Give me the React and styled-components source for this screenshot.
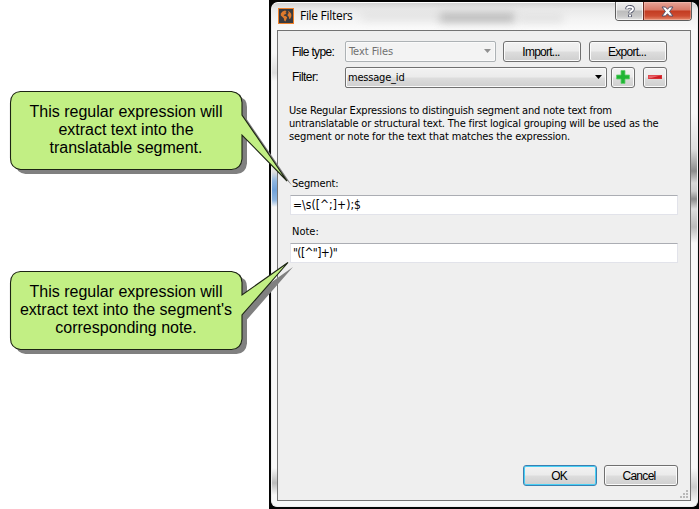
import React from "react";
import styled, { createGlobalStyle, css } from "styled-components";

const GlobalStyle = createGlobalStyle`
  * { box-sizing: border-box; }
  body { margin: 0; background: #fff; overflow: hidden; }
`;

const Page = styled.main`
  position: relative;
  width: 699px;
  height: 509px;
  display: flex;
  justify-content: flex-end;
  font-family: "DejaVu Sans Condensed", "DejaVu Sans", sans-serif;
  font-stretch: condensed;
  font-size: 11px;
  color: #000;
`;

const Backdrop = styled.div`
  width: 430px;
  height: 509px;
  padding: 2px;
  background: #050505;
`;

const Dialog = styled.section`
  display: flex;
  flex-direction: column;
  width: 427px;
  height: 505px;
  padding: 0 6px 5px;
  border: 1px solid #eee;
  border-top-color: #fff;
  border-radius: 7px 7px 6px 6px;
  background:
    linear-gradient(180deg, transparent 50px, #ddd 70px, transparent 78px, transparent 160px, #e0e0e0 169px, #8fb6e0 178px, #70a2da 187px, #8fb6e0 197px, transparent 204px, transparent 465px, #bbb 480px, transparent 492px) 0 0 / 6px 100% no-repeat,
    linear-gradient(180deg, transparent 110px, #ddd 146px, #8c8c8c 168px, #d8d8d8 180px, #ccc 188px, #8c8c8c 196px, #ddd 206px, #bbb 224px, transparent 240px, transparent 465px, #ccc 484px, transparent 500px) 100% 0 / 6px 100% no-repeat,
    #f8f8f8;
`;

const TitleBar = styled.header`
  position: relative;
  display: flex;
  align-items: center;
  height: 27px;
  flex: none;
  margin: 0 -6px;
  padding: 0 0 1px 6px;
  border-radius: 6px 6px 0 0;
  background: linear-gradient(180deg, #d4d4d4, #e9e9e9 6px, #f3f3f3 16px, #fbfbfb);
`;

const Smudge = styled.span`
  position: absolute;
  left: ${(p) => p.$left}px;
  top: ${(p) => p.$top}px;
  width: ${(p) => p.$width}px;
  height: ${(p) => p.$height}px;
  background: ${(p) => p.$tone};
  filter: blur(4px);
`;

const AppIcon = styled.svg`
  flex: none;
  width: 16px;
  height: 16px;
`;

const Title = styled.h1`
  position: relative;
  flex: 1;
  margin: 0 0 0 6px;
  font: 400 12px/16px "Open Sans", "Noto Sans", sans-serif;
  letter-spacing: -0.3px;
`;

const CaptionButtons = styled.div`
  position: relative;
  align-self: flex-start;
  display: flex;
  height: 19px;
  width: 77px;
  margin: -1px 5px 0 0;
  border: 1px solid #5d5d5d;
  border-top: 0;
  border-radius: 0 0 4px 4px;
  overflow: hidden;
`;

const CaptionButton = styled.button`
  display: flex;
  align-items: center;
  justify-content: center;
  height: 100%;
  padding: 0;
  border: 0;
  ${(p) =>
    p.$close
      ? css`
          width: 48px;
          border-left: 1px solid #6c2a20;
          background: linear-gradient(180deg, #e7a497, #d87967 8px, #c33b21 9px, #cd4c31 14px, #e58a6d);
          box-shadow: inset 0 0 0 1px rgba(255, 210, 200, 0.4);
        `
      : css`
          width: 27px;
          background: linear-gradient(180deg, #ededed, #dedede 8px, #bcbcbc 9px, #c7c7c7 14px, #e4e4e4);
          box-shadow: inset 0 0 0 1px rgba(255, 255, 255, 0.7);
        `}
`;

const Client = styled.div`
  display: flex;
  flex-direction: column;
  flex: 1;
  min-height: 0;
  width: 414px;
  margin-left: -1px;
  border: 1px solid #737373;
  background: #efefef;
`;

const FilterGrid = styled.div`
  display: grid;
  grid-template-columns: 52px 1fr;
  grid-auto-rows: 22px;
  row-gap: 4px;
  margin: 9px 22px 0 15px;
`;

const systemFace = css`
  font-family: "Liberation Sans", Arial, sans-serif;
  font-size: 12px;
`;

const Label = styled.label`
  display: block;
  ${(p) => p.$system && systemFace}
  line-height: 14px;
  white-space: nowrap;
  letter-spacing: ${(p) => p.$spacing || 0}px;
  margin: ${(p) => p.$margin || "0"};
`;

const Controls = styled.div`
  display: flex;
  align-items: center;
  gap: ${(p) => p.$gap}px;
`;

const Combo = styled.button`
  display: flex;
  align-items: center;
  justify-content: space-between;
  width: ${(p) => p.$width}px;
  height: 21px;
  padding: 0 4px 0 ${(p) => (p.$disabled ? 3 : 2)}px;
  border: 1px solid ${(p) => (p.$disabled ? "#adb2b5" : "#707070")};
  border-radius: 2px;
  background: ${(p) =>
    p.$disabled ? "#f3f3f3" : "linear-gradient(180deg, #f2f2f2, #ebebeb 48%, #dddddd 52%, #cfcfcf)"};
  box-shadow: inset 0 0 0 1px #fafafa;
  color: ${(p) => (p.$disabled ? "#707070" : "#000")};
  font: inherit;
  letter-spacing: ${(p) => p.$spacing || 0}px;
`;

const Arrow = styled.svg`
  width: 7px;
  height: 4px;
  fill: currentColor;
  opacity: ${(p) => (p.$faded ? 0.75 : 1)};
`;

const Button = styled.button`
  display: flex;
  align-items: center;
  justify-content: center;
  width: ${(p) => p.$width}px;
  height: 21px;
  padding: ${(p) => p.$drop || 0}px ${(p) => p.$padRight || 0}px 0 0;
  border: 1px solid ${(p) => (p.$primary ? "#3c7fb1" : "#707070")};
  border-radius: 3px;
  background: linear-gradient(180deg, #f2f2f2, #ebebeb 48%, #dddddd 52%, #cfcfcf);
  box-shadow: inset 0 0 0 1px ${(p) => (p.$primary ? "#48d0f5" : "#fbfbfb")};
  color: #000;
  ${systemFace}
  letter-spacing: ${(p) => p.$spacing || 0}px;
`;

const Glyph = styled.svg`
  display: block;
  flex: none;
`;

const Description = styled.p`
  margin: 16px 0 0 11px;
  line-height: 13px;
`;

const Line = styled.span`
  display: block;
  white-space: nowrap;
  letter-spacing: ${(p) => p.$spacing}px;
`;

const Fields = styled.div`
  display: flex;
  flex-direction: column;
  flex: 1;
  margin: 34px 12px 0;
`;

const Expression = styled.div`
  height: 20px;
  margin: 4px 0 10px;
  padding: 0 2px;
  border: 1px solid #e2e3ea;
  border-top-color: #abadb3;
  background: #fff;
  font-size: 12px;
  line-height: 18px;
  letter-spacing: ${(p) => p.$spacing}px;
`;

const Footer = styled.footer`
  display: flex;
  justify-content: flex-end;
  align-items: flex-end;
  height: 36px;
  padding-bottom: 1px;
`;

const Actions = styled.div`
  display: flex;
  gap: 7px;
  margin-bottom: 13px;
`;

const Grip = styled.svg`
  width: 9px;
  height: 9px;
  margin: 0 1px 0 2px;
`;

const Callout = styled.aside`
  position: absolute;
  left: 0;
  top: ${(p) => p.$top}px;
  width: 300px;
  height: 130px;
  pointer-events: none;
`;

const Balloon = styled.svg`
  position: absolute;
  inset: 0;
`;

const CalloutText = styled.div`
  position: relative;
  width: 232px;
  margin-left: 10px;
  padding-top: ${(p) => p.$pad}px;
  font: 16px/18px "Liberation Sans", Arial, sans-serif;
  text-align: center;
`;

const upperBalloon =
  "M20.5 11.5H231.5Q242 13 242 22.5V35L287 101L242 55V79Q241 89 231.5 89.5H20.5Q10.5 88 10.5 78.5V22.5Q11 12 20.5 11.5Z";
const lowerBalloon =
  "M20.5 21.5H231.5Q242 23 242 32.5V45L288 12.5L242 65V89Q241 99 231.5 99.5H20.5Q10.5 98 10.5 88.5V32.5Q11 22 20.5 21.5Z";

function CalloutBalloon({ top, d, pad, lines }) {
  return (
    <Callout $top={top}>
      <Balloon width="300" height="130">
        <path d={d} fill="#808080" transform="translate(5 4.5)" />
        <path d={d} fill="#c2ef84" stroke="#1c2413" strokeWidth="1.1" />
      </Balloon>
      <CalloutText $pad={pad}>
        {lines.map((text) => (
          <Line key={text} $spacing={0}>{text}</Line>
        ))}
      </CalloutText>
    </Callout>
  );
}

function DropArrow({ faded }) {
  return (
    <Arrow viewBox="0 0 7 4" $faded={faded}>
      <path d="M0 0H7L3.5 4Z" />
    </Arrow>
  );
}

export default function App() {
  return (
    <Page>
      <GlobalStyle />
      <Backdrop>
        <Dialog>
          <TitleBar>
            <Smudge $left={90} $top={10} $width={80} $height={6} $tone="#dedede" />
            <Smudge $left={168} $top={10} $width={75} $height={9} $tone="#b5b5b5" />
            <Smudge $left={246} $top={12} $width={45} $height={6} $tone="#dadada" />
            <AppIcon viewBox="0 0 16 16">
              <rect x="0.5" y="0.5" width="15" height="15" fill="#3c3b3e" stroke="#f0812a" />
              <path
                d="M2.8 5.5L4.5 3.5L7 2.5L8.6 3.2L7.4 4.2L8.6 5L7.4 6.2L6 6.8L5.8 7.8L7.6 8L9.2 9.2L8.6 10.8L7.4 13.4L6.2 12.4L5.8 10.2L4.2 8.8L2.8 7.6Z M9.8 2.8L11.8 4L13.2 5.8L13.4 8L12.4 10.6L11.2 11L10.8 8.8L9.6 7.8L9.8 6L10.8 5Z"
                fill="#e07a2c"
              />
            </AppIcon>
            <Title>File Filters</Title>
            <CaptionButtons>
              <CaptionButton aria-label="Help">
                <Glyph width="10" height="13" viewBox="0 0 10 13" fill="none">
                  <path d="M2 4.2C2 1 8 1 8 4C8 6 5 5.8 5 8.2M5 9.6V12" stroke="#4c5066" strokeWidth="3.6" />
                  <path d="M2 3.8C2 1.2 8 1.2 8 4C8 6 5 5.8 5 7.8M5 9.8V11.4" stroke="#fff" strokeWidth="2" />
                </Glyph>
              </CaptionButton>
              <CaptionButton $close aria-label="Close">
                <Glyph width="13" height="11" viewBox="0 0 13 11">
                  <path
                    d="M1 1H4.5L6.5 3.3L8.5 1H12L8.6 5.5L12 10H8.5L6.5 7.7L4.5 10H1L4.4 5.5Z"
                    fill="#fff"
                    stroke="#54516a"
                  />
                </Glyph>
              </CaptionButton>
            </CaptionButtons>
          </TitleBar>
          <Client>
            <FilterGrid>
              <Label $system $margin="5px 0 0 -1px" $spacing={-0.65}>File type:</Label>
              <Controls $gap={7}>
                <Combo $width={151} $disabled $spacing={-0.05}>
                  Text Files
                  <DropArrow faded />
                </Combo>
                <Controls $gap={8}>
                  <Button $width={78} $spacing={-0.75} $padRight={2} $drop={2}>Import...</Button>
                  <Button $width={78} $spacing={-0.75} $padRight={2} $drop={2}>Export...</Button>
                </Controls>
              </Controls>
              <Label $system $margin="4px 0 0 -1px" $spacing={-0.55}>Filter:</Label>
              <Controls $gap={4}>
                <Combo $width={262} $spacing={-0.2}>
                  message_id
                  <DropArrow />
                </Combo>
                <Controls $gap={8}>
                  <Button $width={24} aria-label="Add">
                    <Glyph width="14" height="14" viewBox="0 0 14 14">
                      <path d="M5 0.5H9V5H13.5V9H9V13.5H5V9H0.5V5H5Z" fill="#1fb534" stroke="#66d06e" strokeWidth="0.8" />
                    </Glyph>
                  </Button>
                  <Button $width={24} aria-label="Remove">
                    <Glyph width="14" height="4" viewBox="0 0 14 4">
                      <rect width="14" height="4" fill="#e8646a" />
                      <path d="M0 4L14 0V4Z" fill="#cf1b22" />
                      <rect x="0.5" y="0.5" width="13" height="3" fill="none" stroke="#d93a3f" strokeOpacity="0.6" />
                    </Glyph>
                  </Button>
                </Controls>
              </Controls>
            </FilterGrid>
            <Description>
              <Line $spacing={-0.175}>Use Regular Expressions to distinguish segment and note text from</Line>
              <Line $spacing={-0.18}>untranslatable or structural text. The first logical grouping will be used as the</Line>
              <Line $spacing={-0.135}>segment or note for the text that matches the expression.</Line>
            </Description>
            <Fields>
              <Label $margin="0 0 0 2px" $spacing={-0.2}>Segment:</Label>
              <Expression $spacing={0.05}>=\s([^;]+);$</Expression>
              <Label $margin="0 0 0 2px">Note:</Label>
              <Expression $spacing={-0.65}>"([^"]+)"</Expression>
            </Fields>
            <Footer>
              <Actions>
                <Button $width={74} $spacing={-0.8} $padRight={2} $primary>OK</Button>
                <Button $width={74} $spacing={-0.7} $padRight={4}>Cancel</Button>
              </Actions>
              <Grip viewBox="0 0 9 9" fill="#b9b9b9">
                <path d="M6 0h2v2h-2zM3 3h2v2h-2zM6 3h2v2h-2zM0 6h2v2h-2zM3 6h2v2h-2zM6 6h2v2h-2z" />
              </Grip>
            </Footer>
          </Client>
        </Dialog>
      </Backdrop>
      <CalloutBalloon
        top={80}
        d={upperBalloon}
        pad={23}
        lines={["This regular expression will", "extract text into the", "translatable segment."]}
      />
      <CalloutBalloon
        top={250}
        d={lowerBalloon}
        pad={33}
        lines={["This regular expression will", "extract text into the segment's", "corresponding note."]}
      />
    </Page>
  );
}
